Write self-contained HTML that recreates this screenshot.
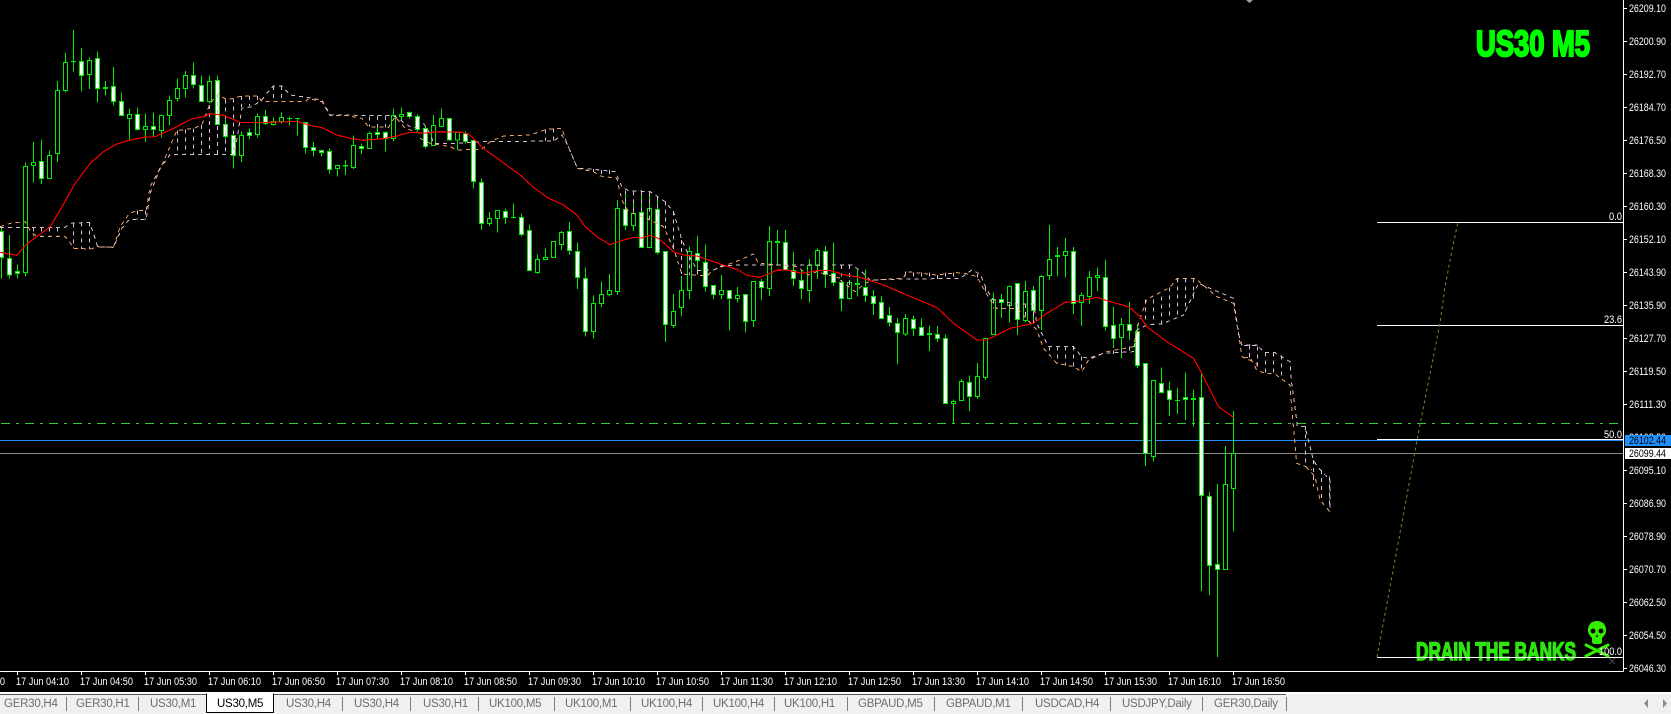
<!DOCTYPE html>
<html><head><meta charset="utf-8"><style>
html,body{margin:0;padding:0;background:#000;width:1671px;height:714px;overflow:hidden}
svg{display:block;font-family:"Liberation Sans",sans-serif}
.w{stroke:#00ee00;stroke-width:3;fill:none}
.wb{stroke:#00ee00;stroke-width:3;fill:#fff}
.hb{stroke:#00ee00;stroke-width:3;fill:#000}
.o{stroke:#f4a460;stroke-width:3;fill:none;stroke-dasharray:12 12}
.t{stroke:#d8bfd8;stroke-width:3;fill:none;stroke-dasharray:12 12}
.r{stroke:#f00;stroke-width:3.4;fill:none}
.px{font-size:11px;fill:#fff}
.tm{font-size:11px;fill:#fff}
.tb{font-size:11.5px;letter-spacing:-.25px;fill:#6d6d6d}
.fb{font-size:11px;fill:#fff}
</style></head><body>
<svg width="1671" height="714" viewBox="0 0 1671 714" xmlns="http://www.w3.org/2000/svg">
<rect width="1671" height="714" fill="#000"/>
<g shape-rendering="crispEdges">
<path d="M1 423.5H1618" stroke="#3cc83c" stroke-dasharray="9 6 3 6" fill="none"/>
<path d="M0 440.5H1623" stroke="#1e90ff" fill="none"/>
<path d="M0 453.5H1623" stroke="#8a8a8a" fill="none"/>
<path d="M1377 222.5H1623M1377 325.5H1623M1377 439.5H1623M1377 657.5H1623" stroke="#fff" fill="none"/>
</g>
<path d="M1377 657L1395 560L1412 468L1417 440L1440 323L1445 287L1452 250L1458 222" stroke="#6b8e23" stroke-dasharray="3 3" fill="none"/>

<g transform="translate(0.167,20) scale(0.33333)" shape-rendering="crispEdges">
<path class="w" d="M4 620V775M28 645V775M52 733V775M76 427V770M100 366V488M124 360V492M148 391V476M172 183V426M196 99V218M220 30V155M212 124h16M244 84V215M268 113V207M292 94V248M316 183V227M340 141V257M364 217V287M388 267V360M412 262V332M436 281V365M460 277V350M484 283V353M508 226V315M532 175V245M556 153V233M580 127V205M604 166V245M628 166V250M652 166V314M676 300V355M700 345V446M724 335V426M748 325V357M772 280V353M796 270V315M820 292V316M844 277V310M868 289V317M860 295h16M892 295V347M884 295h16M916 307V401M940 366V410M964 388V410M988 385V462M1012 434V470M1036 420V465M1060 346V447M1084 370V402M1108 335V386M1132 320V357M1156 335V395M1180 265V365M1204 262V305M1228 275V295M1252 283V335"/>
<path class="hb" d="M70 439h12V757h-12zM94 427h12V437h-12zM142 406h12V476h-12zM166 211h12V401h-12zM190 127h12V212h-12zM262 121h12V164h-12zM310 203h12V205h-12zM382 283h12V295h-12zM430 319h12V329h-12zM478 286h12V332h-12zM502 241h12V287h-12zM526 205h12V236h-12zM550 166h12V206h-12zM622 184h12V245h-12zM718 346h12V407h-12zM766 289h12V344h-12zM814 304h12V314h-12zM838 292h12V304h-12zM1006 436h12V445h-12zM1030 436h12V438h-12zM1054 376h12V443h-12zM1102 340h12V386h-12zM1174 287h12V356h-12zM1198 283h12V290h-12z"/>
<path class="wb" d="M-2 634h12V712h-12zM22 715h12V765h-12zM46 754h12V761h-12zM118 424h12V476h-12zM238 124h12V166h-12zM286 115h12V206h-12zM334 199h12V245h-12zM358 244h12V287h-12zM406 283h12V329h-12zM454 319h12V329h-12zM574 166h12V193h-12zM598 196h12V245h-12zM646 181h12V314h-12zM670 313h12V349h-12zM694 346h12V407h-12zM742 337h12V346h-12zM790 289h12V310h-12zM910 307h12V383h-12zM934 382h12V392h-12zM958 391h12V398h-12zM982 394h12V449h-12zM1078 379h12V385h-12zM1126 337h12V344h-12zM1150 337h12V355h-12zM1222 278h12V290h-12zM1246 290h12V329h-12z"/>
<path class="o" d="M0 620L30 610L75 605L95 640L115 650L195 650L208 665L220 685L272 687L290 680L340 682L360 620L388 580L410 572L438 572L450 500L485 435L530 332L580 325L605 315L630 250L655 222L680 240L725 228L775 228L785 245L870 245L915 245L925 235L965 245L990 287L1040 287L1085 295L1105 320L1165 322L1185 290L1215 325L1260 340"/>
<path class="t" d="M0 622L195 622L210 610L268 607L285 655L292 680L340 682L365 625L388 598L438 598L450 520L480 445L510 403L700 403L712 350L725 265L755 260L785 240L800 220L820 198L845 198L870 225L920 232L965 240L990 285L1180 287L1200 300L1230 320L1260 325"/>
<path class="t" d="M100 622V650M124 622V650M148 622V650M172 622V650M220 610V685M244 607V687M268 607V687M412 572V598M436 572V598M532 332V403M556 328V403M580 325V403M604 315V403M628 255V403M652 222V403M676 238V403M700 235V403M724 228V262M748 228V258M772 228V250M820 198V245M844 198V245M1108 290V320M1132 288V322M1156 288V322"/>
<path class="r" d="M0 697L50 706L80 672L150 620L180 570L225 490L270 430L310 395L350 372L390 360L430 352L465 350L520 325L575 297L610 290L630 281L670 286L720 307L760 308L850 306L890 304L930 316L965 323L1010 345L1060 357L1090 361L1150 356L1190 348L1225 338L1260 338"/>
</g>

<g transform="translate(420.167,100) scale(0.33333)" shape-rendering="crispEdges">
<path class="w" d="M16 80V146M40 45V137M64 25V80M88 55V122M112 95V150M136 95V130M160 121V266M184 235V390M208 336V378M232 331V398M256 325V372M280 310V356M272 352h16M304 340V410M328 373V512M352 463V522M376 445V479M400 424V473M424 393V450M448 366V465M472 427V567M496 502V710M520 586V716M544 544V621M568 522V590M592 300V585M616 280V390M640 300V393M664 270V442M688 280V443M712 290V464M736 453V726M760 582V684M784 528V648M808 440V597M832 408V513M856 433V574M880 556V597M904 525V597M928 571V692M952 561V608M976 583V698M1000 544V681M1024 537V600M1048 378V588M1072 390V497M1096 390V510M1120 456V558M1144 512V597M1168 477V608M1192 445V537M1216 438V564M1240 427V558"/>
<path class="hb" d="M34 76h12V137h-12zM58 55h12V80h-12zM106 97h12V120h-12zM202 355h12V371h-12zM226 331h12V356h-12zM346 478h12V518h-12zM370 472h12V479h-12zM394 424h12V473h-12zM418 397h12V434h-12zM514 610h12V695h-12zM538 583h12V611h-12zM562 571h12V584h-12zM586 325h12V575h-12zM634 340h12V377h-12zM682 325h12V443h-12zM754 634h12V677h-12zM778 571h12V623h-12zM802 454h12V571h-12zM898 571h12V584h-12zM946 586h12V596h-12zM994 544h12V662h-12zM1042 424h12V566h-12zM1066 424h12V428h-12zM1162 496h12V572h-12zM1186 451h12V496h-12z"/>
<path class="wb" d="M10 85h12V140h-12zM82 55h12V120h-12zM130 100h12V125h-12zM154 121h12V245h-12zM178 247h12V371h-12zM250 334h12V353h-12zM298 352h12V404h-12zM322 391h12V512h-12zM442 394h12V452h-12zM466 454h12V533h-12zM490 535h12V694h-12zM610 328h12V377h-12zM658 337h12V442h-12zM706 328h12V458h-12zM730 454h12V673h-12zM826 461h12V482h-12zM850 488h12V560h-12zM874 556h12V584h-12zM922 572h12V596h-12zM970 583h12V665h-12zM1018 544h12V562h-12zM1090 427h12V510h-12zM1114 512h12V536h-12zM1138 541h12V566h-12zM1210 454h12V524h-12zM1234 520h12V548h-12z"/>
<path class="o" d="M0 115L30 130L90 140L110 150L185 148L210 125L250 108L330 105L380 88L425 85L440 130L472 205L520 215L540 228L590 235L605 300L625 335L690 360L730 380L760 445L785 522L860 528L880 510L960 480L1000 462L1015 490L1080 495L1130 500L1165 525L1190 515L1260 535"/>
<path class="t" d="M10 70L30 100L40 130L110 130L190 125L400 123L425 105L440 130L472 205L510 207L585 215L605 260L625 272L690 275L735 305L760 335L785 420L808 470L832 512L880 510L905 497L960 495L1260 495"/>
<path class="t" d="M376 88V123M400 85V123M520 207V215M544 210V228M568 210V232M616 272V335M640 275V345M664 275V350M688 275V360M712 290V370M736 305V385M760 335V445M784 420V522M808 470V525M832 512V525"/>
<path class="r" d="M0 100L60 95L125 97L150 105L190 145L235 178L300 225L340 262L380 292L430 315L470 345L495 380L530 410L570 434L600 423L640 412L665 414L690 406L715 415L760 455L790 465L830 468L900 492L950 508L980 526L1020 532L1070 511L1100 510L1145 520L1190 512L1230 512L1260 520"/>
</g>

<g transform="translate(840.167,200) scale(0.33333)" shape-rendering="crispEdges">
<path class="w" d="M4 240V333M28 240V298M52 208V290M76 208V306M100 270V345M124 288V356M148 321V380M172 354V492M196 342V408M220 347V408M244 355V407M268 376V453M292 378V426M316 403V610M340 598V670M364 537V602M388 526V633M412 489V597M436 415V540M460 277V404M484 282V354M508 256V368M532 250V405M556 243V368M580 258V360M604 225V390M628 75V240M652 141V228M676 114V233M700 141V342M724 277V378M748 213V312M772 202V273M796 180V392M820 321V444M844 354V476M868 306V420M892 372V504M916 490V798M940 541V785M964 502V581M988 544V648M1012 564V642M1004 601h16M1036 517V660M1060 568V680M1084 518V1173M1108 876V1185M1132 852V1371M1156 738V1108M1180 633V995"/>
<path class="hb" d="M22 247h12V296h-12zM46 250h12V254h-12zM190 355h12V402h-12zM262 400h12V404h-12zM334 604h12V611h-12zM358 544h12V602h-12zM406 529h12V590h-12zM430 415h12V533h-12zM454 298h12V404h-12zM502 259h12V317h-12zM550 274h12V361h-12zM598 229h12V331h-12zM622 178h12V226h-12zM646 166h12V170h-12zM670 154h12V166h-12zM718 286h12V308h-12zM742 232h12V290h-12zM766 226h12V232h-12zM838 373h12V413h-12zM934 541h12V770h-12zM1054 595h12V598h-12zM1150 853h12V1108h-12zM1174 761h12V865h-12z"/>
<path class="wb" d="M-2 247h12V296h-12zM70 262h12V287h-12zM94 289h12V311h-12zM118 307h12V356h-12zM142 346h12V368h-12zM166 370h12V398h-12zM214 358h12V386h-12zM238 382h12V407h-12zM286 403h12V416h-12zM310 415h12V610h-12zM382 547h12V590h-12zM478 299h12V307h-12zM526 250h12V358h-12zM574 271h12V331h-12zM694 154h12V310h-12zM790 232h12V380h-12zM814 376h12V415h-12zM862 373h12V391h-12zM886 394h12V496h-12zM910 490h12V760h-12zM958 550h12V578h-12zM982 571h12V598h-12zM1030 592h12V598h-12zM1078 592h12V887h-12zM1102 889h12V1097h-12zM1126 1093h12V1109h-12z"/>
<path class="o" d="M0 240L45 275L75 250L100 240L190 235L200 215L290 225L350 218L385 222L410 230L450 300L470 325L530 325L590 390L610 445L650 490L700 500L725 515L745 480L800 455L880 440L895 370L920 298L990 262L1010 235L1065 235L1130 290L1180 310L1195 400L1205 470L1250 490L1252 510"/>
<path class="t" d="M0 195L35 195L65 215L90 240L160 238L360 235L395 210L420 222L440 270L460 300L530 312L580 312L590 370L605 400L625 440L700 440L725 470L745 475L790 460L880 455L890 390L920 375L965 372L1030 345L1075 250L1110 265L1180 295L1195 400L1205 435L1252 435"/>
<path class="t" d="M4 195V230M28 195V255M196 215V238M220 218V238M244 218V238M268 218V238M292 225V238M316 218V238M340 218V236M412 222V232M436 262V285M460 298V325M508 312V325M532 312V325M556 312V350M580 312V375M628 440V462M652 440V490M676 440V496M700 440V500M724 470V515M820 452V462M844 448V458M868 440V455M916 298V378M940 298V375M964 290V372M988 262V358M1012 235V350M1036 235V335M1060 235V295M1228 435V480"/>
<path class="r" d="M0 222L60 232L130 255L200 285L290 322L340 370L410 420L440 420L510 385L580 370L620 340L675 307L720 303L770 292L820 308L865 320L900 350L920 380L980 425L1060 475L1085 520L1135 620L1180 652"/>
</g>

<g transform="translate(1240,200) scale(0.33333)" shape-rendering="crispEdges">
<path class="o" d="M12 472L30 472L50 510L75 520L105 522L150 555L155 620L170 790L198 800L215 810"/>
<path class="t" d="M12 436L50 436L75 458L105 458L150 485L155 550L165 620L172 678L195 680L205 720L220 780L232 800L270 840L270 936"/>
<path class="o" d="M198 800L225 830L240 900L270 936"/>
<path class="t" d="M28 436V472M52 440V510M76 458V520M100 458V522M124 466V530M196 680V800M220 780V860M244 810V905M268 830V925"/>
</g>

<!-- frames -->
<g shape-rendering="crispEdges">
<path d="M1623.5 0V671.5M0 671.5H1623.5" stroke="#fff" fill="none"/>
<path stroke="#fff" fill="none" d="M1624 8.5h3M1624 41.5h3M1624 74.5h3M1624 107.5h3M1624 140.5h3M1624 173.5h3M1624 206.5h3M1624 239.5h3M1624 272.5h3M1624 305.5h3M1624 338.5h3M1624 371.5h3M1624 404.5h3M1624 470.5h3M1624 503.5h3M1624 536.5h3M1624 569.5h3M1624 602.5h3M1624 635.5h3M1624 668.5h3"/>
<path stroke="#fff" fill="none" d="M17.5 672v3M81.5 672v3M145.5 672v3M209.5 672v3M273.5 672v3M337.5 672v3M401.5 672v3M465.5 672v3M529.5 672v3M593.5 672v3M657.5 672v3M721.5 672v3M785.5 672v3M849.5 672v3M913.5 672v3M977.5 672v3M1041.5 672v3M1105.5 672v3M1169.5 672v3M1233.5 672v3"/>
</g>
<path d="M1246 0h7l-3.500 3z" fill="#8fa5b5"/>

<g class="px">
<text x="1629" y="12" class="px" textLength="37" lengthAdjust="spacingAndGlyphs">26209.10</text>
<text x="1629" y="45" class="px" textLength="37" lengthAdjust="spacingAndGlyphs">26200.90</text>
<text x="1629" y="78" class="px" textLength="37" lengthAdjust="spacingAndGlyphs">26192.70</text>
<text x="1629" y="111" class="px" textLength="37" lengthAdjust="spacingAndGlyphs">26184.70</text>
<text x="1629" y="144" class="px" textLength="37" lengthAdjust="spacingAndGlyphs">26176.50</text>
<text x="1629" y="177" class="px" textLength="37" lengthAdjust="spacingAndGlyphs">26168.30</text>
<text x="1629" y="210" class="px" textLength="37" lengthAdjust="spacingAndGlyphs">26160.30</text>
<text x="1629" y="243" class="px" textLength="37" lengthAdjust="spacingAndGlyphs">26152.10</text>
<text x="1629" y="276" class="px" textLength="37" lengthAdjust="spacingAndGlyphs">26143.90</text>
<text x="1629" y="309" class="px" textLength="37" lengthAdjust="spacingAndGlyphs">26135.90</text>
<text x="1629" y="342" class="px" textLength="37" lengthAdjust="spacingAndGlyphs">26127.70</text>
<text x="1629" y="375" class="px" textLength="37" lengthAdjust="spacingAndGlyphs">26119.50</text>
<text x="1629" y="408" class="px" textLength="37" lengthAdjust="spacingAndGlyphs">26111.30</text>
<text x="1629" y="441" class="px" textLength="37" lengthAdjust="spacingAndGlyphs">26103.30</text>
<text x="1629" y="474" class="px" textLength="37" lengthAdjust="spacingAndGlyphs">26095.10</text>
<text x="1629" y="507" class="px" textLength="37" lengthAdjust="spacingAndGlyphs">26086.90</text>
<text x="1629" y="540" class="px" textLength="37" lengthAdjust="spacingAndGlyphs">26078.90</text>
<text x="1629" y="573" class="px" textLength="37" lengthAdjust="spacingAndGlyphs">26070.70</text>
<text x="1629" y="606" class="px" textLength="37" lengthAdjust="spacingAndGlyphs">26062.50</text>
<text x="1629" y="639" class="px" textLength="37" lengthAdjust="spacingAndGlyphs">26054.50</text>
<text x="1629" y="672" class="px" textLength="37" lengthAdjust="spacingAndGlyphs">26046.30</text>
</g>
<rect x="1625" y="435" width="46" height="11" fill="#1e90ff" shape-rendering="crispEdges"/>
<text x="1629" y="444" style="font-size:11px;fill:#000" textLength="37" lengthAdjust="spacingAndGlyphs">26102.44</text>
<rect x="1625" y="448" width="46" height="11" fill="#fff" shape-rendering="crispEdges"/>
<text x="1629" y="457" style="font-size:11px;fill:#000" textLength="37" lengthAdjust="spacingAndGlyphs">26099.44</text>

<text class="fb" x="1622" y="220" text-anchor="end" textLength="13" lengthAdjust="spacingAndGlyphs">0.0</text>
<text class="fb" x="1622" y="323" text-anchor="end" textLength="18" lengthAdjust="spacingAndGlyphs">23.6</text>
<text class="fb" x="1622" y="438" text-anchor="end" textLength="18" lengthAdjust="spacingAndGlyphs">50.0</text>

<g class="tm">
<text class="tm" x="-48" y="685" textLength="53" lengthAdjust="spacingAndGlyphs">17 Jun 03:30</text>
<text class="tm" x="16" y="685" textLength="53" lengthAdjust="spacingAndGlyphs">17 Jun 04:10</text>
<text class="tm" x="80" y="685" textLength="53" lengthAdjust="spacingAndGlyphs">17 Jun 04:50</text>
<text class="tm" x="144" y="685" textLength="53" lengthAdjust="spacingAndGlyphs">17 Jun 05:30</text>
<text class="tm" x="208" y="685" textLength="53" lengthAdjust="spacingAndGlyphs">17 Jun 06:10</text>
<text class="tm" x="272" y="685" textLength="53" lengthAdjust="spacingAndGlyphs">17 Jun 06:50</text>
<text class="tm" x="336" y="685" textLength="53" lengthAdjust="spacingAndGlyphs">17 Jun 07:30</text>
<text class="tm" x="400" y="685" textLength="53" lengthAdjust="spacingAndGlyphs">17 Jun 08:10</text>
<text class="tm" x="464" y="685" textLength="53" lengthAdjust="spacingAndGlyphs">17 Jun 08:50</text>
<text class="tm" x="528" y="685" textLength="53" lengthAdjust="spacingAndGlyphs">17 Jun 09:30</text>
<text class="tm" x="592" y="685" textLength="53" lengthAdjust="spacingAndGlyphs">17 Jun 10:10</text>
<text class="tm" x="656" y="685" textLength="53" lengthAdjust="spacingAndGlyphs">17 Jun 10:50</text>
<text class="tm" x="720" y="685" textLength="53" lengthAdjust="spacingAndGlyphs">17 Jun 11:30</text>
<text class="tm" x="784" y="685" textLength="53" lengthAdjust="spacingAndGlyphs">17 Jun 12:10</text>
<text class="tm" x="848" y="685" textLength="53" lengthAdjust="spacingAndGlyphs">17 Jun 12:50</text>
<text class="tm" x="912" y="685" textLength="53" lengthAdjust="spacingAndGlyphs">17 Jun 13:30</text>
<text class="tm" x="976" y="685" textLength="53" lengthAdjust="spacingAndGlyphs">17 Jun 14:10</text>
<text class="tm" x="1040" y="685" textLength="53" lengthAdjust="spacingAndGlyphs">17 Jun 14:50</text>
<text class="tm" x="1104" y="685" textLength="53" lengthAdjust="spacingAndGlyphs">17 Jun 15:30</text>
<text class="tm" x="1168" y="685" textLength="53" lengthAdjust="spacingAndGlyphs">17 Jun 16:10</text>
<text class="tm" x="1232" y="685" textLength="53" lengthAdjust="spacingAndGlyphs">17 Jun 16:50</text>
</g>

<text x="1476" y="56" textLength="114" lengthAdjust="spacingAndGlyphs" style="font-size:36px;font-weight:bold;fill:#00ff00;stroke:#00ff00;stroke-width:2.2px">US30 M5</text>
<text x="1416" y="660" textLength="160" lengthAdjust="spacingAndGlyphs" style="font-size:25px;font-weight:bold;fill:#2ee510;stroke:#2ee510;stroke-width:1.5px">DRAIN THE BANKS</text>
<path d="M1377 657.5H1623" stroke="#fff" shape-rendering="crispEdges"/>

<!-- skull -->
<g>
<path d="M1597 621c6 0 9 4 9 9 0 4-2 6-4 8v4c0 1-1 2-2 2h-6c-1 0-2-1-2-2v-4c-2-2-4-4-4-8 0-5 3-9 9-9z" fill="#33ee00"/>
<circle cx="1593" cy="631" r="2.4" fill="#000"/><circle cx="1601" cy="631" r="2.4" fill="#000"/>
<path d="M1597 634l-1 3h2z" fill="#000"/>
<path d="M1586 645L1608 656M1608 645L1586 656" stroke="#33ee00" stroke-width="3" stroke-linecap="round"/>
<path d="M1609 658l6 6M1615 658l-6 6" stroke="#444" stroke-width="1.2"/>
</g>
<text class="fb" x="1622" y="655" text-anchor="end" textLength="23" lengthAdjust="spacingAndGlyphs">100.0</text>

<!-- tab bar -->
<g shape-rendering="crispEdges">
<rect x="0" y="692" width="1671" height="2" fill="#fff"/>
<rect x="0" y="694" width="1671" height="20" fill="#f0f0f0"/>
<rect x="0" y="694" width="1286" height="1" fill="#555"/>
<path d="M66.500 697v14M138.500 697v14M342.500 697v14M410.500 697v14M478.500 697v14M554.500 697v14M630.500 697v14M702.500 697v14M774.500 697v14M847.500 697v14M934.500 697v14M1022.500 697v14M1110.500 697v14M1202.500 697v14M1286.500 697v14" stroke="#808080" fill="none"/>
<path d="M206.500 693.500V712.500H273.500V693.500" fill="#fff" stroke="#000"/>
<rect x="207" y="692" width="66" height="3" fill="#fff"/>
</g>
<g class="tb">
<text class="tb" x="4" y="707">GER30,H4</text>
<text class="tb" x="76" y="707">GER30,H1</text>
<text class="tb" x="150" y="707">US30,M1</text>
<text x="217" y="707" style="font-size:11.5px;letter-spacing:-.25px;fill:#000">US30,M5</text>
<text class="tb" x="286" y="707">US30,H4</text>
<text class="tb" x="354" y="707">US30,H4</text>
<text class="tb" x="423" y="707">US30,H1</text>
<text class="tb" x="489" y="707">UK100,M5</text>
<text class="tb" x="565" y="707">UK100,M1</text>
<text class="tb" x="641" y="707">UK100,H4</text>
<text class="tb" x="713" y="707">UK100,H4</text>
<text class="tb" x="784" y="707">UK100,H1</text>
<text class="tb" x="858" y="707">GBPAUD,M5</text>
<text class="tb" x="946" y="707">GBPAUD,M1</text>
<text class="tb" x="1035" y="707">USDCAD,H4</text>
<text class="tb" x="1122" y="707">USDJPY,Daily</text>
<text class="tb" x="1214" y="707">GER30,Daily</text>
</g>
<path d="M1648 699v9l-4-4.500zM1663 699v9l4-4.500z" fill="#8c8c8c"/>
</svg>
</body></html>
